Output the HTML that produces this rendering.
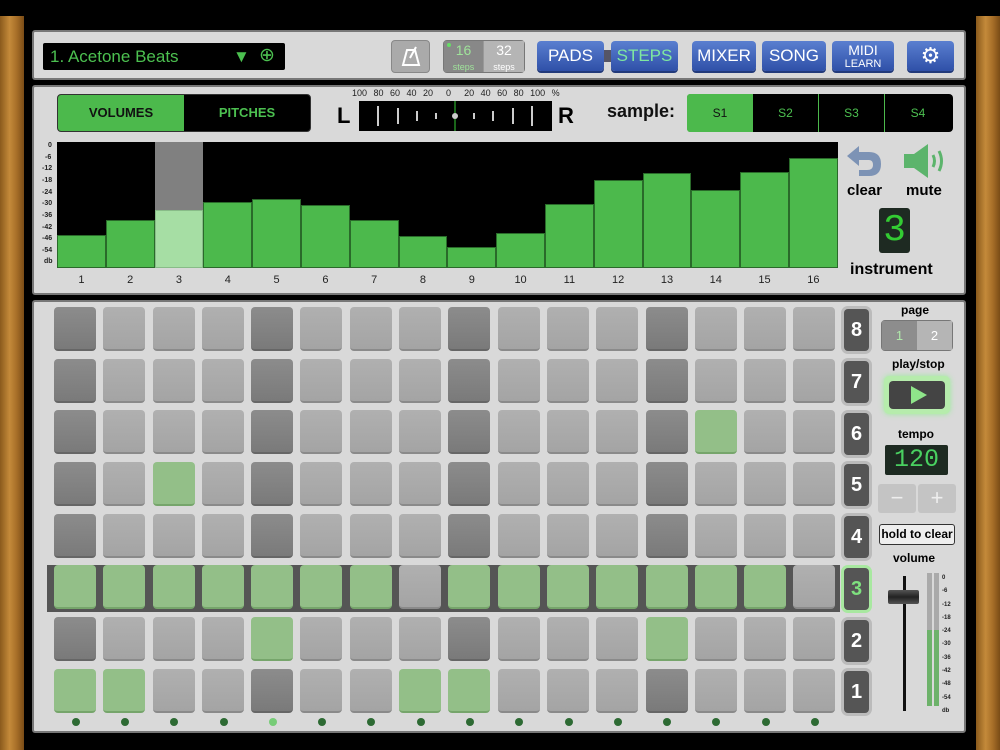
<!DOCTYPE html>
<html><head><meta charset="utf-8"><style>
*{box-sizing:border-box;margin:0;padding:0}
body{width:1000px;height:750px;background:#000;position:relative;overflow:hidden;font-family:"Liberation Sans",sans-serif}
.a{position:absolute}
.wood{background:linear-gradient(90deg,#8a5a1c,#c48a3a 40%,#a66e28 70%,#7a4c16)}
.panel{background:#d9d9d9;border:2px solid #777;border-radius:3px}
.btn{position:absolute;top:41px;height:30px;border-radius:4px;background:linear-gradient(#5a7fd0,#2f50a8);color:#fff;font-size:17px;text-align:center;line-height:30px;box-shadow:0 2px 0 #223a7a}
.pads{position:absolute;left:54px;top:307px;display:grid;grid-template-columns:repeat(16,42px);column-gap:7.3px;row-gap:7.7px;grid-auto-rows:44px}
.pads div{border-radius:4px;background:linear-gradient(#b0b0b0,#a4a4a4);border-bottom:2px solid #8a8a8a}
.pads .d{background:linear-gradient(#8c8c8c,#7a7a7a);border-bottom-color:#666}
.pads .g{background:#93bf88;border-bottom-color:#76a56b}
.bar{position:absolute;bottom:0;background:#4cb94c;border:1px solid #2a6a2a;width:48.8px}
.rl{position:absolute;left:844px;width:25px;height:42px;border-radius:4px;background:#555;color:#fff;font-weight:bold;font-size:20px;text-align:center;line-height:42px;box-shadow:0 0 0 3px #bbb}
.dot{position:absolute;top:718px;width:8px;height:8px;border-radius:50%;background:#2d6a33}
.db{position:absolute;font-size:7px;font-weight:bold;color:#222}
</style></head><body>
<div class="a wood" style="left:0;top:16px;width:24px;height:734px"></div>
<div class="a wood" style="left:976px;top:16px;width:24px;height:734px"></div>

<!-- top panel -->
<div class="a panel" style="left:32px;top:30px;width:934px;height:50px"></div>
<div class="a" style="left:43px;top:43px;width:242px;height:27px;background:#000;border-radius:2px;color:#4cc050;font-size:17px;line-height:27px;padding-left:7px">1. Acetone Beats<span class="a" style="left:190px;top:0">▼</span><span class="a" style="left:216px;top:-1px;font-size:19px">⊕</span></div>
<div class="a" style="left:391px;top:40px;width:39px;height:33px;border-radius:4px;background:#aaa;border:1px solid #888"><svg width="37" height="31"><path d="M11 24 L15 9 L23 9 L27 24 Z M18 17 L24 6" fill="none" stroke="#fff" stroke-width="2"/></svg></div>
<div class="a" style="left:443px;top:40px;width:82px;height:33px;border-radius:4px;background:#999;border:1px solid #777"></div>
<div class="a" style="left:444px;top:41px;width:39px;height:31px;background:#888;color:#9fe39a;text-align:center;font-size:14px;line-height:15px;padding-top:2px">16<br><span style="font-size:9px">steps</span></div>
<div class="a" style="left:447px;top:43px;width:4px;height:4px;border-radius:50%;background:#6d6"></div>
<div class="a" style="left:484px;top:41px;width:40px;height:31px;background:#b5b5b5;color:#fff;text-align:center;font-size:14px;line-height:15px;padding-top:2px">32<br><span style="font-size:9px">steps</span></div>
<div class="btn" style="left:537px;width:67px">PADS</div>
<div class="a" style="left:604px;top:50px;width:7px;height:12px;background:#556"></div>
<div class="btn" style="left:611px;width:67px;color:#7fe8a0">STEPS</div>
<div class="btn" style="left:692px;width:64px">MIXER</div>
<div class="btn" style="left:762px;width:64px">SONG</div>
<div class="btn" style="left:832px;width:62px;line-height:12px;padding-top:3px;font-size:14px">MIDI<br><span style="font-size:11px">LEARN</span></div>
<div class="btn" style="left:907px;width:47px;font-size:22px">⚙</div>

<!-- middle panel -->
<div class="a panel" style="left:32px;top:85px;width:934px;height:210px"></div>
<div class="a" style="left:57px;top:94px;width:254px;height:38px;background:#000;border-radius:4px;border:1px solid #333;font-weight:bold;font-size:13px;line-height:36px">
<div class="a" style="left:0;top:0;width:126px;height:36px;background:#4cb94c;text-align:center;color:#111;border-radius:3px 0 0 3px">VOLUMES</div>
<div class="a" style="left:126px;top:0;width:126px;height:36px;text-align:center;color:#4cc050">PITCHES</div></div>
<div class="a" style="left:352px;top:88px;font-size:9px;color:#222;word-spacing:4px">100 80 60 40 20 &nbsp;0 &nbsp;20 40 60 80 100 %</div>
<div class="a" style="left:337px;top:103px;font-size:22px;font-weight:bold">L</div>
<div class="a" style="left:558px;top:103px;font-size:22px;font-weight:bold">R</div>
<svg class="a" style="left:359px;top:101px" width="193" height="30"><rect width="193" height="30" fill="#000"/>
<g stroke="#ccc" stroke-width="2"><line x1="19" y1="5" x2="19" y2="25"/><line x1="39" y1="7" x2="39" y2="23"/><line x1="58" y1="10" x2="58" y2="20"/><line x1="77" y1="12" x2="77" y2="18"/><line x1="115" y1="12" x2="115" y2="18"/><line x1="134" y1="10" x2="134" y2="20"/><line x1="154" y1="7" x2="154" y2="23"/><line x1="173" y1="5" x2="173" y2="25"/></g>
<line x1="96" y1="0" x2="96" y2="30" stroke="#3c3" stroke-width="1"/><circle cx="96" cy="15" r="3" fill="#ccc"/></svg>
<div class="a" style="left:607px;top:101px;font-size:18px;font-weight:bold;color:#111">sample:</div>
<div class="a" style="left:687px;top:94px;width:266px;height:38px;background:#000;border-radius:4px;font-size:12px;line-height:38px;color:#4cc050;text-align:center">
<div class="a" style="left:0;width:66px;height:38px;background:#4cb94c;color:#111;border-radius:3px 0 0 3px">S1</div>
<div class="a" style="left:66px;width:66px;border-right:1px solid #4cb94c">S2</div>
<div class="a" style="left:132px;width:66px;border-right:1px solid #4cb94c">S3</div>
<div class="a" style="left:198px;width:66px">S4</div></div>

<!-- chart -->
<div class="a" style="left:57px;top:142px;width:781px;height:126px;background:#000">
<div class="a" style="left:97.6px;top:0;width:48.8px;height:126px;background:#808080"></div>
<div class="bar" style="left:0;height:33px"></div>
<div class="bar" style="left:48.8px;height:48px"></div>
<div class="bar" style="left:97.6px;height:58px;background:#a6dea4;border-color:#8b8"></div>
<div class="bar" style="left:146.4px;height:66px"></div>
<div class="bar" style="left:195.2px;height:69px"></div>
<div class="bar" style="left:244px;height:63px"></div>
<div class="bar" style="left:292.8px;height:48px"></div>
<div class="bar" style="left:341.6px;height:32px"></div>
<div class="bar" style="left:390.4px;height:21px"></div>
<div class="bar" style="left:439.2px;height:35px"></div>
<div class="bar" style="left:488px;height:64px"></div>
<div class="bar" style="left:536.8px;height:88px"></div>
<div class="bar" style="left:585.6px;height:95px"></div>
<div class="bar" style="left:634.4px;height:78px"></div>
<div class="bar" style="left:683.2px;height:96px"></div>
<div class="bar" style="left:732px;height:110px"></div>
</div>
<div class="db" style="left:48px;top:142px">0</div><div class="db" style="left:45px;top:154px">-6</div><div class="db" style="left:42px;top:165px">-12</div><div class="db" style="left:42px;top:177px">-18</div><div class="db" style="left:42px;top:189px">-24</div><div class="db" style="left:42px;top:200px">-30</div><div class="db" style="left:42px;top:212px">-36</div><div class="db" style="left:42px;top:224px">-42</div><div class="db" style="left:42px;top:235px">-46</div><div class="db" style="left:42px;top:247px">-54</div><div class="db" style="left:44px;top:258px">db</div>
<div class="a" style="left:57px;top:274px;width:781px;display:flex;font-size:11px;color:#222"><span style="width:48.8px;text-align:center">1</span><span style="width:48.8px;text-align:center">2</span><span style="width:48.8px;text-align:center">3</span><span style="width:48.8px;text-align:center">4</span><span style="width:48.8px;text-align:center">5</span><span style="width:48.8px;text-align:center">6</span><span style="width:48.8px;text-align:center">7</span><span style="width:48.8px;text-align:center">8</span><span style="width:48.8px;text-align:center">9</span><span style="width:48.8px;text-align:center">10</span><span style="width:48.8px;text-align:center">11</span><span style="width:48.8px;text-align:center">12</span><span style="width:48.8px;text-align:center">13</span><span style="width:48.8px;text-align:center">14</span><span style="width:48.8px;text-align:center">15</span><span style="width:48.8px;text-align:center">16</span></div>
<svg class="a" style="left:843px;top:142px" width="42" height="38"><path d="M16 4 L4 14 L16 24 L16 18 L26 18 Q30 18 30 23 Q30 28 24 28 L16 28 L16 34 L26 34 Q38 34 38 22 Q38 10 26 10 L16 10 Z" fill="#7d93b5"/></svg>
<svg class="a" style="left:900px;top:142px" width="50" height="38"><path d="M4 12 L14 12 L28 2 L28 36 L14 26 L4 26 Z" fill="#5cb46c"/><path d="M33 13 Q36 19 33 25 M39 9 Q44 19 39 29" stroke="#5cb46c" stroke-width="3" fill="none"/></svg>
<div class="a" style="left:847px;top:182px;font-size:15px;font-weight:bold">clear</div>
<div class="a" style="left:906px;top:182px;font-size:15px;font-weight:bold">mute</div>
<div class="a" style="left:879px;top:208px;width:31px;height:45px;background:#1e2a22;border-radius:3px;color:#3c3;font-family:'Liberation Mono',monospace;font-size:38px;line-height:45px;text-align:center">3</div>
<div class="a" style="left:850px;top:261px;font-size:16px;font-weight:bold">instrument</div>

<!-- grid panel -->
<div class="a panel" style="left:32px;top:300px;width:934px;height:433px"></div>
<div class="a" style="left:47px;top:565px;width:793px;height:47px;background:#555"></div>
<div class="pads">
<div class="d"></div><div></div><div></div><div></div><div class="d"></div><div></div><div></div><div></div><div class="d"></div><div></div><div></div><div></div><div class="d"></div><div></div><div></div><div></div>
<div class="d"></div><div></div><div></div><div></div><div class="d"></div><div></div><div></div><div></div><div class="d"></div><div></div><div></div><div></div><div class="d"></div><div></div><div></div><div></div>
<div class="d"></div><div></div><div></div><div></div><div class="d"></div><div></div><div></div><div></div><div class="d"></div><div></div><div></div><div></div><div class="d"></div><div class="g"></div><div></div><div></div>
<div class="d"></div><div></div><div class="g"></div><div></div><div class="d"></div><div></div><div></div><div></div><div class="d"></div><div></div><div></div><div></div><div class="d"></div><div></div><div></div><div></div>
<div class="d"></div><div></div><div></div><div></div><div class="d"></div><div></div><div></div><div></div><div class="d"></div><div></div><div></div><div></div><div class="d"></div><div></div><div></div><div></div>
<div class="g"></div><div class="g"></div><div class="g"></div><div class="g"></div><div class="g"></div><div class="g"></div><div class="g"></div><div></div><div class="g"></div><div class="g"></div><div class="g"></div><div class="g"></div><div class="g"></div><div class="g"></div><div class="g"></div><div></div>
<div class="d"></div><div></div><div></div><div></div><div class="g"></div><div></div><div></div><div></div><div class="d"></div><div></div><div></div><div></div><div class="g"></div><div></div><div></div><div></div>
<div class="g"></div><div class="g"></div><div></div><div></div><div class="d"></div><div></div><div></div><div class="g"></div><div class="g"></div><div></div><div></div><div></div><div class="d"></div><div></div><div></div><div></div>
</div>
<div class="rl" style="top:309px">8</div><div class="rl" style="top:361px">7</div><div class="rl" style="top:413px">6</div><div class="rl" style="top:464px">5</div><div class="rl" style="top:516px">4</div><div class="rl" style="top:568px;color:#7ee07e;box-shadow:0 0 0 3px #a8e8a0">3</div><div class="rl" style="top:620px">2</div><div class="rl" style="top:671px">1</div>
<div class="dot" style="left:72px"></div><div class="dot" style="left:121px"></div><div class="dot" style="left:170px"></div><div class="dot" style="left:220px"></div><div class="dot" style="left:269px;background:#7c7"></div><div class="dot" style="left:318px"></div><div class="dot" style="left:367px"></div><div class="dot" style="left:417px"></div><div class="dot" style="left:466px"></div><div class="dot" style="left:515px"></div><div class="dot" style="left:565px"></div><div class="dot" style="left:614px"></div><div class="dot" style="left:663px"></div><div class="dot" style="left:712px"></div><div class="dot" style="left:762px"></div><div class="dot" style="left:811px"></div>

<!-- right controls -->
<div class="a" style="left:901px;top:303px;font-size:12px;font-weight:bold">page</div>
<div class="a" style="left:881px;top:320px;width:72px;height:31px;border-radius:4px;background:#999;border:1px solid #777"></div>
<div class="a" style="left:882px;top:321px;width:35px;height:29px;background:#8d8d8d;color:#afe8aa;text-align:center;line-height:29px;font-size:13px">1</div>
<div class="a" style="left:917px;top:321px;width:35px;height:29px;background:#b5b5b5;color:#fff;text-align:center;line-height:29px;font-size:13px">2</div>
<div class="a" style="left:892px;top:357px;font-size:12px;font-weight:bold">play/stop</div>
<div class="a" style="left:884px;top:376px;width:66px;height:38px;border-radius:5px;background:#b6ecac;box-shadow:0 0 6px #9e9"></div>
<div class="a" style="left:889px;top:381px;width:56px;height:28px;border-radius:4px;background:#444"><svg width="56" height="28"><path d="M22 5 L38 14 L22 23 Z" fill="#8fe58a"/></svg></div>
<div class="a" style="left:898px;top:427px;font-size:12px;font-weight:bold">tempo</div>
<div class="a" style="left:885px;top:445px;width:63px;height:30px;background:#1d2a21;border-radius:2px;color:#49d060;font-family:'Liberation Mono',monospace;font-size:25px;line-height:30px;text-align:center">120</div>
<div class="a" style="left:878px;top:484px;width:38px;height:29px;background:#c4c4c4;border-radius:3px;color:#eee;text-align:center;font-size:22px;line-height:27px">−</div>
<div class="a" style="left:918px;top:484px;width:38px;height:29px;background:#c4c4c4;border-radius:3px;color:#eee;text-align:center;font-size:22px;line-height:27px">+</div>
<div class="a" style="left:879px;top:524px;width:76px;height:21px;border:1px solid #333;border-radius:3px;background:#eee;font-size:12px;font-weight:bold;text-align:center;line-height:19px">hold to clear</div>
<div class="a" style="left:893px;top:551px;font-size:12px;font-weight:bold">volume</div>
<div class="a" style="left:903px;top:576px;width:3px;height:135px;background:#111"></div>
<div class="a" style="left:888px;top:590px;width:31px;height:14px;background:linear-gradient(#555,#222,#555);border-radius:2px"></div>
<div class="a" style="left:927px;top:573px;width:5px;height:133px;background:#aaa"></div>
<div class="a" style="left:934px;top:573px;width:5px;height:133px;background:#aaa"></div>
<div class="a" style="left:927px;top:630px;width:5px;height:76px;background:#6db26a"></div>
<div class="a" style="left:934px;top:630px;width:5px;height:76px;background:#6db26a"></div>
<div class="db" style="left:942px;top:572px;font-size:6px;line-height:13.3px">0<br>-6<br>-12<br>-18<br>-24<br>-30<br>-36<br>-42<br>-48<br>-54<br>db</div>
</body></html>
